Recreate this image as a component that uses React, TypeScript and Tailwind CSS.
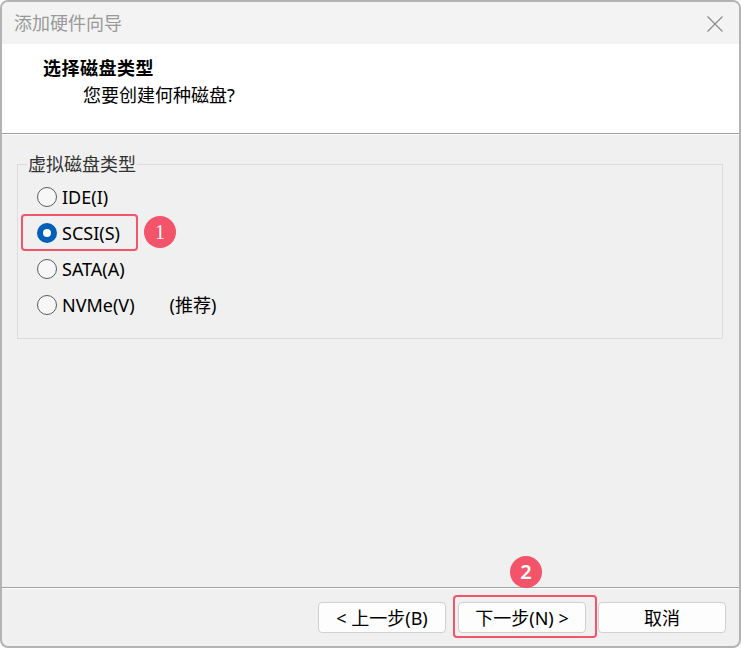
type Option = { label: string; note?: string; checked?: boolean; mark?: string }

const options: Option[] = [
  { label: 'IDE(I)' },
  { label: 'SCSI(S)', checked: true, mark: '1' },
  { label: 'SATA(A)' },
  { label: 'NVMe(V)', note: '(推荐)' },
]

function Radio({ checked }: { checked?: boolean }) {
  if (checked)
    return (
      <span className="w-[20px] h-[20px] rounded-full bg-[#005fb8] flex items-center justify-center shrink-0">
        <span className="w-[8px] h-[8px] rounded-full bg-white" />
      </span>
    )
  return <span className="w-[20px] h-[20px] rounded-full border border-[#5c5c5c] bg-[#f7f7f7] shrink-0" />
}

function Badge({ n, serif }: { n: string; serif?: boolean }) {
  return (
    <span
      className={
        'w-[32px] h-[32px] rounded-full bg-[#f4546a] text-white flex items-center justify-center text-[20px] leading-none ' +
        (serif ? "font-['Liberation_Serif',serif]" : 'font-semibold')
      }
    >
      {n}
    </span>
  )
}

export default function App() {
  return (
    <div className="w-[741px] h-[648px] bg-white font-['Noto_Sans','Noto_Sans_CJK_SC',sans-serif] text-black">
      <div className="w-full h-full border-2 border-[#b3b3b3] rounded-[8px] overflow-hidden flex flex-col bg-[#f0f0f0]">
        {/* title bar */}
        <div className="h-[42px] bg-[#f3f3f3] flex items-center justify-between pl-[12px] pr-[16px] shrink-0">
          <span className="text-[18px] text-[#999999] leading-none">添加硬件向导</span>
          <svg width="16" height="16" viewBox="0 0 16 16" className="mt-[1px]">
            <path d="M0.5 0.5 L15.5 15.5 M15.5 0.5 L0.5 15.5" stroke="#8a8a8a" strokeWidth="1.2" fill="none" />
          </svg>
        </div>

        {/* header */}
        <div className="h-[90px] bg-white pl-[41px] pt-[12px] shrink-0 border-b border-[#a0a0a0]">
          <p className="text-[18px] font-bold leading-[24px] tracking-[0.5px]">选择磁盘类型</p>
          <p className="text-[18px] leading-[24px] mt-[3px] ml-[40px]">您要创建何种磁盘?</p>
        </div>
        <div className="h-px bg-white shrink-0" />

        {/* body */}
        <div className="flex-1 pl-[15px] pt-[17px] pr-[16px]">
          <fieldset className="border border-[#dcdcdc] h-[187px] pl-[9px]">
            <legend className="text-[18px] leading-[24px] text-[#333333] px-[1px]">虚拟磁盘类型</legend>
            <div className="pl-[10px] pt-[3px]">
              {options.map(o => (
                <div key={o.label} className="relative h-9 flex items-center gap-[5px] text-[18px]">
                  <Radio checked={o.checked} />
                  <span>{o.label}</span>
                  {o.note && <span className="ml-[30px]">{o.note}</span>}
                  {o.mark && (
                    <>
                      <span className="absolute left-[-16px] top-[-1px] w-[117px] h-[37px] border-2 border-[#f4546a] rounded-[4px]" />
                      <span className="absolute left-[107px] top-[1px]">
                        <Badge n={o.mark} serif />
                      </span>
                    </>
                  )}
                </div>
              ))}
            </div>
          </fieldset>
        </div>

        {/* footer */}
        <div className="h-px bg-[#a0a0a0] shrink-0" />
        <div className="h-px bg-white shrink-0" />
        <div className="h-[57px] flex items-start justify-end gap-[12px] pt-[13px] pr-[13px] shrink-0">
          <button className="w-[128px] h-[31px] bg-[#fdfdfd] border border-[#d0d0d0] rounded-[4px] text-[18px] leading-none">
            &lt; 上一步(B)
          </button>
          <div className="relative">
            <button className="w-[128px] h-[31px] bg-[#fdfdfd] border border-[#d0d0d0] rounded-[4px] text-[18px] leading-none">
              下一步(N) &gt;
            </button>
            <span className="absolute left-[-5px] right-[-11px] top-[-7px] bottom-[-5px] border-2 border-[#f4546a] rounded-[4px]" />
            <span className="absolute left-[52px] top-[-46px]">
              <Badge n="2" />
            </span>
          </div>
          <button className="w-[128px] h-[31px] bg-[#fdfdfd] border border-[#d0d0d0] rounded-[4px] text-[18px] leading-none">
            取消
          </button>
        </div>
      </div>
    </div>
  )
}
